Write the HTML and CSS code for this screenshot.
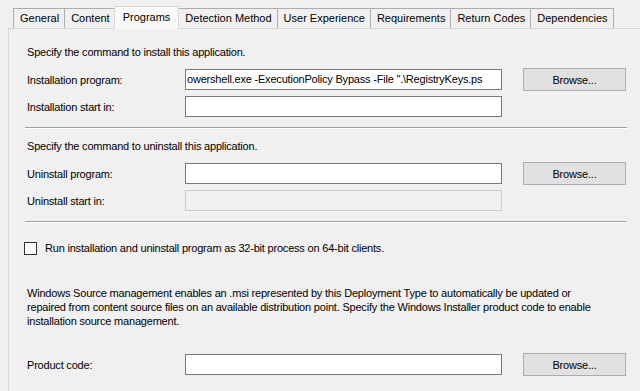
FILE: index.html
```html
<!DOCTYPE html>
<html lang="en">
<head>
    <meta charset="UTF-8">
    <title>Deployment Type Properties - Programs</title>
    <link rel="stylesheet" href="styles.css">
</head>
<body>
<div class="tabs">
    <div class="tab">General</div>
    <div class="tab">Content</div>
    <div class="tab active">Programs</div>
    <div class="tab">Detection Method</div>
    <div class="tab">User Experience</div>
    <div class="tab">Requirements</div>
    <div class="tab">Return Codes</div>
    <div class="tab">Dependencies</div>
</div>

<div class="panel">
    <p class="intro">Specify the command to install this application.</p>
    <div class="row first">
        <label>Installation program:</label>
        <div class="field">owershell.exe -ExecutionPolicy Bypass -File ".\RegistryKeys.ps</div>
        <button>Browse...</button>
    </div>
    <div class="row">
        <label>Installation start in:</label>
        <div class="field"></div>
    </div>

    <div class="separator"></div>

    <p class="intro">Specify the command to uninstall this application.</p>
    <div class="row first">
        <label>Uninstall program:</label>
        <div class="field"></div>
        <button>Browse...</button>
    </div>
    <div class="row">
        <label>Uninstall start in:</label>
        <div class="field disabled"></div>
    </div>

    <div class="separator"></div>

    <div class="check-row">
        <span class="checkbox"></span>
        <span>Run installation and uninstall program as 32-bit process on 64-bit clients.</span>
    </div>

    <p class="note">Windows Source management enables an .msi represented by this Deployment Type to automatically be updated or<br>
        repaired from content source files on an available distribution point. Specify the Windows Installer product code to enable<br>
        installation source management.</p>

    <div class="row product">
        <label>Product code:</label>
        <div class="field"></div>
        <button>Browse...</button>
    </div>
</div>
</body>
</html>
```

FILE: styles.css
```css
* {
    box-sizing: border-box;
    margin: 0;
    padding: 0;
}

body {
    font-family: 'Liberation Sans', Arial, sans-serif;
    font-size: 11px;
    letter-spacing: -0.2px;
    color: #000;
    background-color: #f0f0f0;
    height: 391px;
    overflow: hidden;
}

.tabs {
    display: flex;
    align-items: flex-end;
    height: 29px;
    padding-left: 13px;
    position: relative;
    z-index: 1;
}

.tab {
    height: 20px;
    margin-bottom: 1px;
    padding: 0 5px 0 6px;
    line-height: 19px;
    letter-spacing: 0;
    border: 1px solid #adadad;
    border-bottom: none;
    border-right: none;
    background-color: #f0f0f0;
}

.tab:nth-child(8) {
    border-right: 1px solid #adadad;
}

.tab.active {
    height: 23px;
    margin-bottom: 0;
    margin-left: -1px;
    padding: 0 8px;
    line-height: 20px;
    border-right: 1px solid #d9d9d9;
    border-color: #d9d9d9;
    background-color: #f9f9f9;
}

.tab.active + .tab {
    border-left: none;
}

.panel {
    margin-left: 8px;
    margin-top: -1px;
    height: 363px;
    border-top: 1px solid #d9d9d9;
    border-left: 1px solid #d9d9d9;
    padding: 15px 0 0 15px;
}

.intro {
    line-height: 16px;
    padding-left: 3px;
}

.row {
    display: flex;
    align-items: center;
    height: 23px;
    margin-top: 4px;
}

.row.first {
    margin-top: 8px;
}

.row label {
    width: 161px;
    padding-left: 3px;
}

.field {
    width: 317px;
    height: 21px;
    padding-left: 1px;
    border: 1px solid #7a7a7a;
    background-color: #fff;
    overflow: hidden;
    white-space: nowrap;
    line-height: 19px;
}

.field.disabled {
    border-color: #cccccc;
    background-color: #f0f0f0;
}

button {
    width: 103px;
    height: 23px;
    margin-left: 21px;
    font-family: inherit;
    font-size: inherit;
    letter-spacing: inherit;
    color: #000;
    background-color: #e1e1e1;
    border: 1px solid #adadad;
}

.separator {
    width: 602px;
    height: 2px;
    margin: 9px 0 0 1px;
    border-top: 1px solid #a0a0a0;
    border-bottom: 1px solid #ffffff;
}

.separator + .intro {
    margin-top: 9px;
}

.check-row {
    display: flex;
    align-items: center;
    gap: 8px;
    height: 16px;
    margin-top: 17px;
}

.checkbox {
    width: 13px;
    height: 13px;
    border: 1px solid #333;
    background-color: #fff;
}

.note {
    margin-top: 30px;
    padding-left: 3px;
    line-height: 14px;
}

.row.product {
    margin-top: 25px;
}
```
